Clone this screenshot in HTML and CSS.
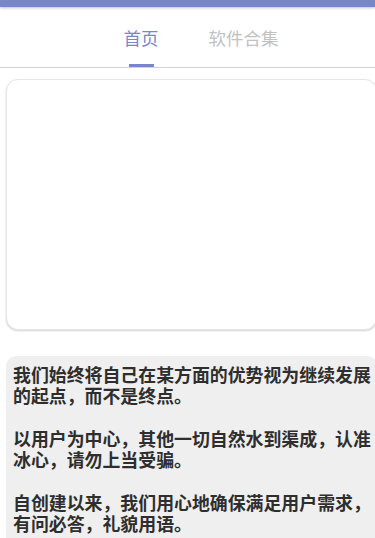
FILE: index.html
```html
<!DOCTYPE html>
<html lang="zh">
<head>
<meta charset="utf-8">
<meta name="viewport" content="width=device-width, initial-scale=1">
<title>首页</title>
<link rel="stylesheet" href="styles.css">
</head>
<body>
<div class="topbar"></div>
<header class="tabs">
  <div class="tab active">首页<span class="indicator"></span></div>
  <div class="tab">软件合集</div>
</header>
<main class="content">
  <section class="card banner"></section>
  <section class="card notice">
    <p>我们始终将自己在某方面的优势视为继续发展的起点，而不是终点。</p>
    <p>以用户为中心，其他一切自然水到渠成，认准冰心，请勿上当受骗。</p>
    <p>自创建以来，我们用心地确保满足用户需求，有问必答，礼貌用语。</p>
  </section>
</main>
</body>
</html>
```
FILE: styles.css
```css
html, body {
  margin: 0;
  padding: 0;
  background: #ffffff;
  overflow-x: hidden;
  font-family: "Noto Sans CJK SC", "Noto Sans", sans-serif;
}

.topbar {
  height: 7px;
  background: #7a86ca;
  box-shadow: 0 1px 3px rgba(0, 0, 0, 0.25);
  position: relative;
  z-index: 1;
}

.tabs {
  display: flex;
  justify-content: center;
  gap: 50px;
  padding-left: 27px;
  border-bottom: 1px solid #d4d4d4;
  box-sizing: border-box;
  height: 61px;
}

.tab {
  position: relative;
  font-size: 17.5px;
  line-height: 1;
  padding-top: 22px;
  color: #c2c2c2;
}

.tab.active {
  color: #7a86ca;
}

.indicator {
  position: absolute;
  left: 5px;
  right: 5px;
  bottom: 0;
  height: 3px;
  background: #7a86ca;
}

.content {
  padding: 11px 0 0 6px;
}

.card {
  width: calc(100% + 2px);
  box-sizing: border-box;
}

.banner {
  height: 251px;
  border: 1px solid #e6e6e6;
  border-radius: 12px;
  box-shadow: 0 1px 2px rgba(0, 0, 0, 0.18);
  background: #ffffff;
}

.notice {
  margin-top: 26px;
  background: #efefef;
  border-radius: 10px;
  padding: 8px 0 20px 7px;
  color: #2e2e2e;
  font-weight: 700;
  font-size: 17.9px;
  line-height: 21.3px;
}

.notice p {
  margin: 0 0 21.3px 0;
}
```
